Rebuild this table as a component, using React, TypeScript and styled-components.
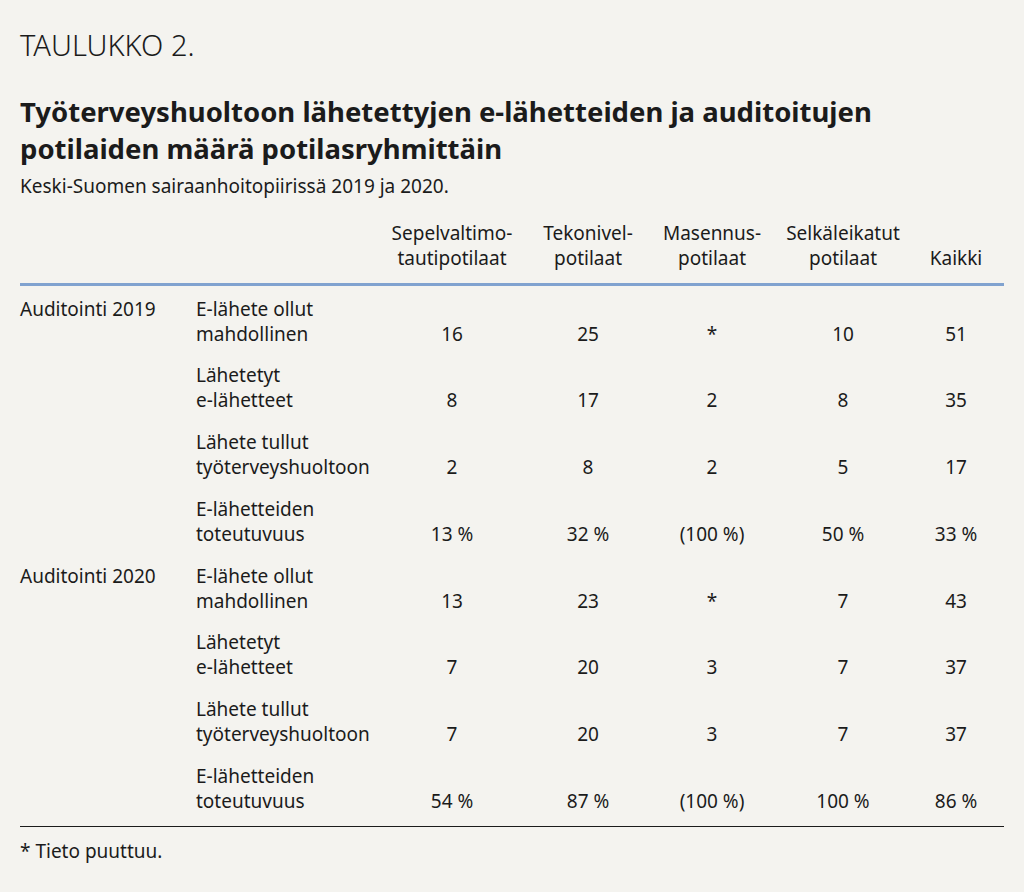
import React from "react";
import styled, { createGlobalStyle } from "styled-components";

const Global = createGlobalStyle`
  html, body { margin: 0; padding: 0; background: #f4f3ef; }
  body { font-family: "Noto Sans", Roboto, sans-serif; color: #1b1b1b; }
`;

const Page = styled.div`
  width: 1024px;
  min-height: 892px;
  box-sizing: border-box;
  padding: 28px 20px 0 20px;
  background: #f4f3ef;
`;

const Kicker = styled.div`
  font-size: 29px;
  font-weight: 300;
  line-height: 34px;
`;

const Title = styled.h1`
  margin: 31px 0 0;
  font-size: 27.5px;
  font-weight: 700;
  line-height: 37px;
`;

const Subtitle = styled.div`
  margin-top: 7px;
  font-size: 19px;
  line-height: 25px;
`;

const cols = "176px 194px 124px 148px 100px 162px 64px 1fr";

const HeadRow = styled.div`
  display: grid;
  grid-template-columns: ${cols};
  margin-top: 22px;
  padding-bottom: 12px;
  border-bottom: 3px solid #80a2cf;
  font-size: 19px;
  line-height: 25px;
`;

const HeadCell = styled.div`
  text-align: center;
  align-self: end;
  white-space: nowrap;
`;

const Body = styled.div`
  padding: 0 0 6px;
  border-bottom: 1px solid #1b1b1b;
`;

const Row = styled.div`
  display: grid;
  grid-template-columns: ${cols};
  padding: 10.5px 0 6.3px;
  font-size: 19px;
  line-height: 25px;
`;

const GroupCell = styled.div`
  align-self: start;
  white-space: nowrap;
`;

const LabelCell = styled.div`
  white-space: nowrap;
`;

const NumCell = styled.div`
  text-align: center;
  align-self: end;
  white-space: nowrap;
`;

const Footnote = styled.div`
  padding-top: 11.5px;
  font-size: 19px;
  line-height: 25px;
`;

const headers: string[][] = [
  ["Sepelvaltimo-", "tautipotilaat"],
  ["Tekonivel-", "potilaat"],
  ["Masennus-", "potilaat"],
  ["Selkäleikatut", "potilaat"],
  ["Kaikki"],
];

const labels: string[][] = [
  ["E-lähete ollut", "mahdollinen"],
  ["Lähetetyt", "e-lähetteet"],
  ["Lähete tullut", "työterveyshuoltoon"],
  ["E-lähetteiden", "toteutuvuus"],
];

const groups = [
  {
    name: "Auditointi 2019",
    values: [
      ["16", "25", "*", "10", "51"],
      ["8", "17", "2", "8", "35"],
      ["2", "8", "2", "5", "17"],
      ["13 %", "32 %", "(100 %)", "50 %", "33 %"],
    ],
  },
  {
    name: "Auditointi 2020",
    values: [
      ["13", "23", "*", "7", "43"],
      ["7", "20", "3", "7", "37"],
      ["7", "20", "3", "7", "37"],
      ["54 %", "87 %", "(100 %)", "100 %", "86 %"],
    ],
  },
];

export default function App() {
  return (
    <Page>
      <Global />
      <Kicker>TAULUKKO 2.</Kicker>
      <Title>
        Työterveyshuoltoon lähetettyjen e-lähetteiden ja auditoitujen
        <br />
        potilaiden määrä potilasryhmittäin
      </Title>
      <Subtitle>Keski-Suomen sairaanhoitopiirissä 2019 ja 2020.</Subtitle>
      <HeadRow>
        <div />
        <div />
        {headers.map((h, i) => (
          <HeadCell key={i}>
            {h.map((l, j) => (
              <div key={j}>{l}</div>
            ))}
          </HeadCell>
        ))}
      </HeadRow>
      <Body>
        {groups.map((g) =>
          g.values.map((vals, ri) => (
            <Row key={g.name + ri}>
              <GroupCell>{ri === 0 ? g.name : ""}</GroupCell>
              <LabelCell>
                {labels[ri].map((l, j) => (
                  <div key={j}>{l}</div>
                ))}
              </LabelCell>
              {vals.map((v, vi) => (
                <NumCell key={vi}>{v}</NumCell>
              ))}
            </Row>
          ))
        )}
      </Body>
      <Footnote>* Tieto puuttuu.</Footnote>
    </Page>
  );
}
